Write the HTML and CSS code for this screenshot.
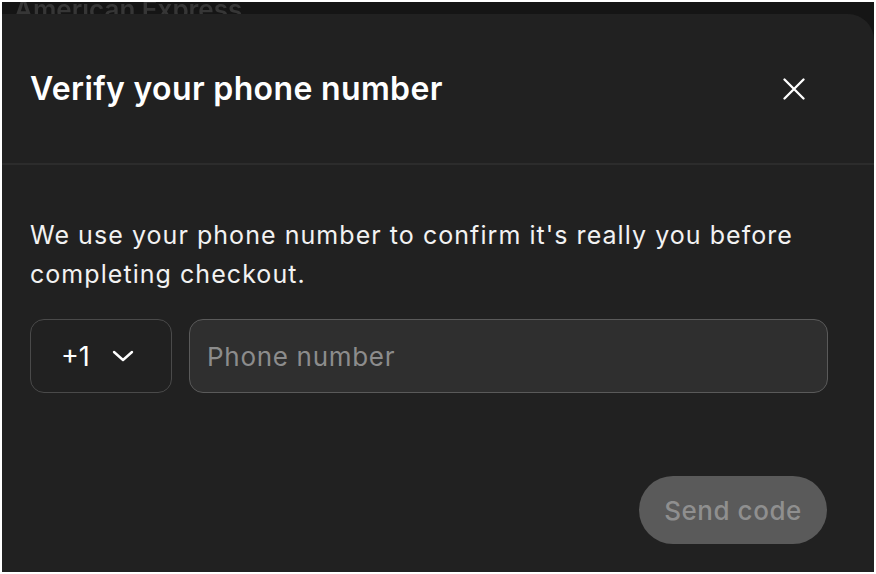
FILE: index.html
```html
<!DOCTYPE html>
<html lang="en">
<head>
<meta charset="utf-8">
<title>Verify your phone number</title>
<link rel="stylesheet" href="styles.css">
</head>
<body>
<div class="frame">
  <div class="backdrop-text">American Express</div>
  <div class="modal">
    <div class="modal-header">
      <h1 class="title">Verify your phone number</h1>
      <button class="close" aria-label="Close">
        <svg width="22" height="22" viewBox="0 0 22 22" fill="none" stroke="#ffffff" stroke-width="2.3" stroke-linecap="round"><path d="M1.5 1.5 L20.5 20.5 M20.5 1.5 L1.5 20.5"/></svg>
      </button>
    </div>
    <div class="modal-body">
      <p class="desc">We use your phone number to confirm it's really you before completing checkout.</p>
      <div class="phone-row">
        <button class="country">
          <span>+1</span>
          <svg width="22" height="12" viewBox="0 0 22 12" fill="none" stroke="#ffffff" stroke-width="2.4" stroke-linecap="round" stroke-linejoin="round"><path d="M2 2 L11 10 L20 2"/></svg>
        </button>
        <input class="phone-input" type="tel" placeholder="Phone number">
      </div>
      <div class="actions">
        <button class="send" disabled>Send code</button>
      </div>
    </div>
  </div>
</div>
</body>
</html>
```

FILE: styles.css
```css
* { box-sizing: border-box; }
html, body { margin: 0; padding: 0; background: #ffffff; }
body { font-family: Inter, "Noto Sans", sans-serif; }
.frame {
  width: 876px;
  height: 574px;
  border: 2px solid #ffffff;
  background: #151515;
  position: relative;
  overflow: hidden;
  padding-top: 12px;
}
.backdrop-text {
  position: absolute;
  left: 12px;
  top: -8px;
  font-size: 26px;
  font-weight: 600;
  color: #363636;
  filter: blur(0.6px);
}
.modal {
  position: relative;
  background: #212121;
  border-top-right-radius: 26px;
  height: 600px;
}
.modal-header {
  height: 151px;
  border-bottom: 2px solid #2c2c2c;
  display: flex;
  align-items: center;
  justify-content: space-between;
  padding: 0 69px 0 28px;
}
.title {
  margin: 0;
  font-size: 32px;
  font-weight: 600;
  letter-spacing: 0.35px;
  color: #ffffff;
}
.close {
  background: none;
  border: 0;
  padding: 0;
  width: 22px;
  height: 22px;
  display: flex;
  cursor: pointer;
}
.modal-body {
  padding: 51px 46px 0 28px;
}
.desc {
  margin: 0;
  font-size: 25px;
  line-height: 39px;
  color: #f2f2f2;
  letter-spacing: 1.05px;
}
.phone-row {
  display: flex;
  gap: 17px;
  margin-top: 25px;
}
.country {
  width: 142px;
  height: 74px;
  border: 1.5px solid #4a4a4a;
  border-radius: 14px;
  background: #212121;
  color: #ffffff;
  font-family: inherit;
  font-size: 27px;
  display: flex;
  align-items: center;
  justify-content: flex-start;
  gap: 22px;
  padding: 0 0 0 30px;
}
.phone-input {
  flex: 1;
  height: 74px;
  border: 1.5px solid #5a5a5a;
  border-radius: 14px;
  background: #2f2f2f;
  color: #ffffff;
  font-family: inherit;
  font-size: 26px;
  letter-spacing: 0.7px;
  padding: 0 17px;
  outline: none;
}
.phone-input::placeholder { color: #8c8c8c; }
.actions {
  display: flex;
  justify-content: flex-end;
  margin-top: 83px;
  padding-right: 1px;
}
.send {
  width: 188px;
  height: 68px;
  border: 0;
  border-radius: 34px;
  background: #5a5a5a;
  color: #8f8f8f;
  font-family: inherit;
  font-size: 26px;
  font-weight: 500;
  letter-spacing: 0.55px;
}
```
